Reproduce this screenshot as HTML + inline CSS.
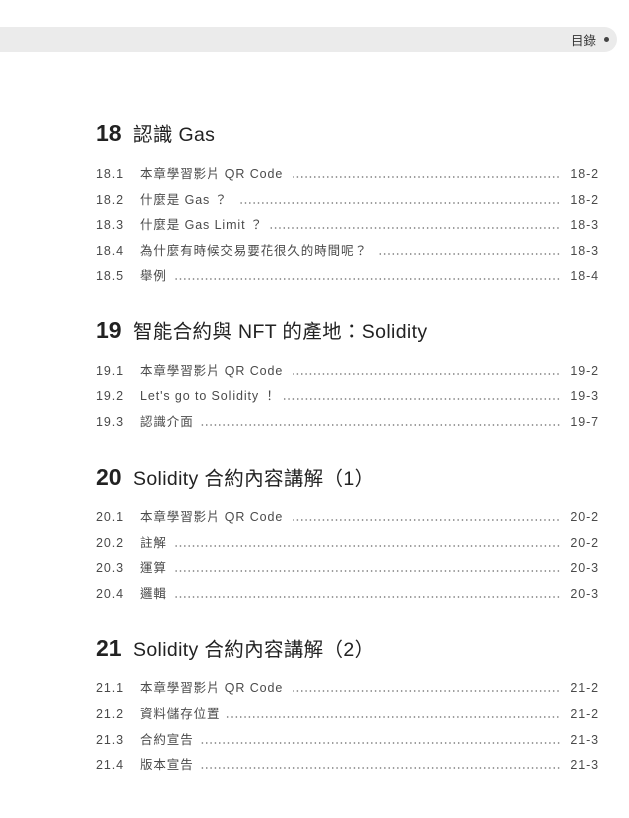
<!DOCTYPE html>
<html><head><meta charset="utf-8"><style>
body{margin:0;width:629px;height:818px;background:#fff;position:relative;overflow:hidden;font-family:"Liberation Sans","Noto Sans CJK TC",sans-serif;}
.bar{position:absolute;left:0;top:27px;width:617px;height:25px;background:#ebebeb;border-radius:0 13px 13px 0;}
.bar span{position:absolute;right:21px;top:3px;font-size:12.5px;color:#333;}
.bar i{position:absolute;right:8px;top:10px;width:5px;height:5px;border-radius:50%;background:#444;}
.h{position:absolute;left:96px;height:28px;line-height:28px;white-space:nowrap;color:#222;}
.h b{font-size:23px;font-weight:bold;display:inline-block;width:37px;}
.h span{font-size:19.5px;letter-spacing:0.35px;}
.r{position:absolute;left:96px;width:503px;height:18px;line-height:18px;display:flex;font-size:12.5px;letter-spacing:0.9px;color:#4a4a4a;white-space:nowrap;}
.r .n{width:44px;}
.r .l{flex:1;margin:0 10px 0 6px;background-image:radial-gradient(circle,#777 0.6px,transparent 1px);background-size:4.35px 4px;background-repeat:repeat-x;background-position:right 10px;}
.r .p{text-align:right;}
</style></head><body>
<div class="bar"><span>目錄</span><i></i></div>

<div class="h" style="top:119px"><b>18</b><span>認識 Gas</span></div>
<div class="r" style="top:165px"><span class="n">18.1</span><span>本章學習影片 QR Code</span><span class="l" style="margin-left:10px"></span><span class="p">18-2</span></div>
<div class="r" style="top:191px"><span class="n">18.2</span><span>什麼是 Gas ？</span><span class="l" style="margin-left:10px"></span><span class="p">18-2</span></div>
<div class="r" style="top:216px"><span class="n">18.3</span><span>什麼是 Gas Limit ？</span><span class="l"></span><span class="p">18-3</span></div>
<div class="r" style="top:242px"><span class="n">18.4</span><span>為什麼有時候交易要花很久的時間呢？</span><span class="l" style="margin-left:10px"></span><span class="p">18-3</span></div>
<div class="r" style="top:267px"><span class="n">18.5</span><span>舉例</span><span class="l"></span><span class="p">18-4</span></div>

<div class="h" style="top:316px"><b>19</b><span>智能合約與 NFT 的產地：Solidity</span></div>
<div class="r" style="top:362px"><span class="n">19.1</span><span>本章學習影片 QR Code</span><span class="l" style="margin-left:10px"></span><span class="p">19-2</span></div>
<div class="r" style="top:387px"><span class="n">19.2</span><span>Let's go to Solidity ！</span><span class="l"></span><span class="p">19-3</span></div>
<div class="r" style="top:413px"><span class="n">19.3</span><span>認識介面</span><span class="l"></span><span class="p">19-7</span></div>

<div class="h" style="top:463px"><b>20</b><span>Solidity 合約內容講解（1）</span></div>
<div class="r" style="top:508px"><span class="n">20.1</span><span>本章學習影片 QR Code</span><span class="l" style="margin-left:10px"></span><span class="p">20-2</span></div>
<div class="r" style="top:534px"><span class="n">20.2</span><span>註解</span><span class="l"></span><span class="p">20-2</span></div>
<div class="r" style="top:559px"><span class="n">20.3</span><span>運算</span><span class="l"></span><span class="p">20-3</span></div>
<div class="r" style="top:585px"><span class="n">20.4</span><span>邏輯</span><span class="l"></span><span class="p">20-3</span></div>

<div class="h" style="top:634px"><b>21</b><span>Solidity 合約內容講解（2）</span></div>
<div class="r" style="top:679px"><span class="n">21.1</span><span>本章學習影片 QR Code</span><span class="l" style="margin-left:10px"></span><span class="p">21-2</span></div>
<div class="r" style="top:705px"><span class="n">21.2</span><span>資料儲存位置</span><span class="l"></span><span class="p">21-2</span></div>
<div class="r" style="top:731px"><span class="n">21.3</span><span>合約宣告</span><span class="l"></span><span class="p">21-3</span></div>
<div class="r" style="top:756px"><span class="n">21.4</span><span>版本宣告</span><span class="l"></span><span class="p">21-3</span></div>
</body></html>
